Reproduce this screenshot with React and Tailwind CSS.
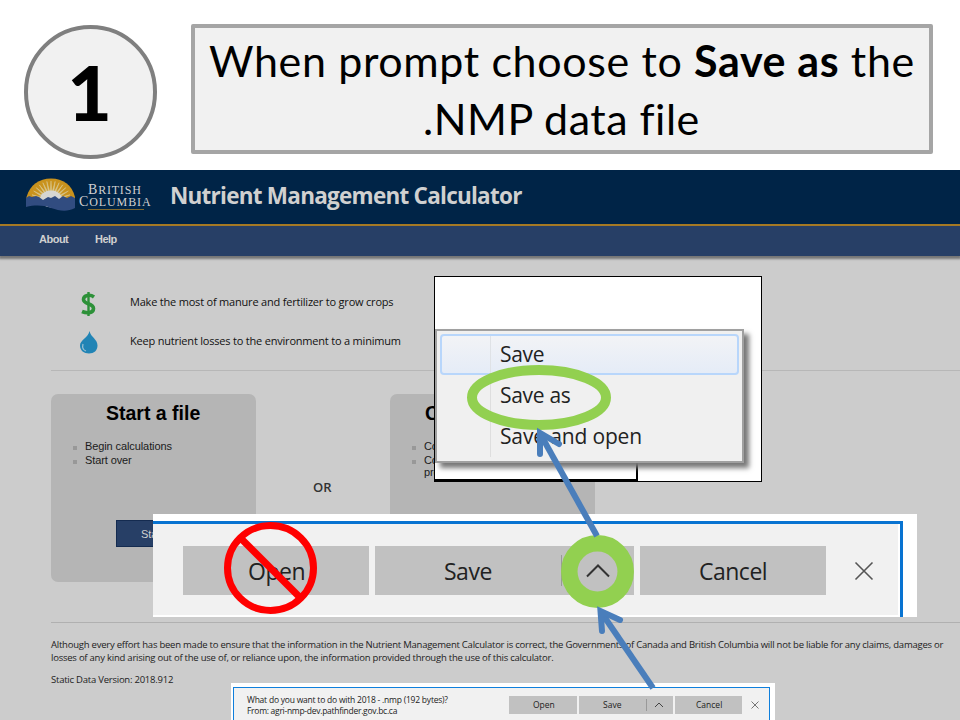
import React from "react";

const seg = "font-['Open_Sans','Noto_Sans',sans-serif]";
const arial = "font-['Liberation_Sans',Arial,sans-serif]";

function T({ className = "", children }) {
  return <span className={`block shrink-0 whitespace-nowrap ${className}`}>{children}</span>;
}

function Heading() {
  return (
    <header className="flex h-[170px] bg-white pl-6 pt-6 font-['Lato',sans-serif] text-black">
      <div className="mt-px flex h-[134px] w-[133px] items-center justify-center rounded-full border-4 border-[#7f7f7f] bg-[#f1f1f1]">
        <T className="pb-px pr-[2px] text-[77px] font-black leading-none">1</T>
      </div>
      <div className="ml-[34px] h-[130px] w-[742px] rounded-[2px] border-4 border-[#a5a5a5] bg-[#f1f1f1] pl-[14px] pt-1 text-[43px] leading-[58px]">
        <T className="tracking-[0.63px]">When prompt choose to <b>Save as</b> the</T>
        <T className="ml-[214px] tracking-[0.5px]">.NMP data file</T>
      </div>
    </header>
  );
}

function Logo() {
  const rays = [-72, -60, -48, -36, -24, -12, 0, 12, 24, 36, 48, 60, 72];
  return (
    <svg className="ml-[26px] mt-2 h-[34px] w-[50px] shrink-0" viewBox="0 0 50 34">
      <path d="M0.500 19C4 7 13 0.500 25 0.500S46 7 49 19v5H0.500z" fill="#c9921d" />
      <g fill="#d8c68d">
        {rays.map((a) => (
          <path key={a} d="M24.200 14L25 3l.8 11z" stroke="#d8c68d" strokeWidth=".5" transform={`rotate(${a} 25 23)`} />
        ))}
      </g>
      <ellipse cx="25" cy="21" rx="11" ry="8.500" fill="#d6d6d2" />
      <path d="M0 20l3-2 3 1 4-1 3 1 4 3 5-3 3 1 4-2 4 3 4-3 4 2 4-2 4 2v10c-8 4-15 3-24 0-8-3-16-3-25-1z" fill="#314c80" />
    </svg>
  );
}

function Banner() {
  return (
    <div className="flex h-14 border-b-2 border-[#a77a22] bg-[#002447] text-[#d0d0d0]">
      <Logo />
      <div className="ml-[3px] mt-[13px] w-[75px] shrink-0 font-['Liberation_Serif',serif] leading-none">
        <T className="ml-[9px] h-[12px] text-[12px] leading-[13px] tracking-[0.8px]"><span className="text-[14px] leading-none">B</span>RITISH</T>
        <T className="h-[12px] text-[12px] leading-[13px] tracking-[0.9px]"><span className="text-[14px] leading-none">C</span>OLUMBIA</T>
        <div className="ml-[9px] mt-[2px] h-px w-14 bg-[#80692f]" />
      </div>
      <T className={`${seg} ml-4 mt-[9px] text-[22.5px] font-bold leading-[34px] tracking-[-0.75px]`}>Nutrient Management Calculator</T>
    </div>
  );
}

function NavBar() {
  return (
    <nav className={`${arial} relative flex h-[30px] bg-[#273f66] pl-[39px] text-[11px] leading-[27px] text-[#d0d0d0] shadow-[0_2px_2px_1px_#777]`}>
      <T className="w-[56px] font-bold tracking-[-0.5px]">About</T>
      <T className="font-bold tracking-[-0.5px]">Help</T>
    </nav>
  );
}

function Bullet({ children }) {
  return (
    <li className="flex leading-[14px]">
      <i className="mr-2 mt-[7px] size-1 bg-[#989898]" />
      <T>{children}</T>
    </li>
  );
}

function Card({ title, titlePad, children }) {
  return (
    <section className={`${arial} h-[188px] w-[205px] shrink-0 rounded-[7px] bg-[#b5b5b5] text-[#1b1b1b]`}>
      <h2 className={`pt-[7px] text-[19.5px] font-bold leading-6 text-black ${titlePad}`}><T>{title}</T></h2>
      <ul className="mt-[14px] pl-[22px] text-[11px] tracking-[-0.1px]">{children}</ul>
    </section>
  );
}

function PageBody() {
  return (
    <main className={`${seg} h-[464px] bg-[#cccccc] pl-[51px] text-[#222]`}>
      <div className="flex h-[114px] flex-col pl-[29px] pt-[26px] text-[11px] font-medium text-[#111]">
        <div className="flex h-[39px] items-center">
          <svg className="mt-1 h-7 w-[18px]" viewBox="0 0 18 28" fill="none" stroke="#2d9139">
            <path d="M8.500 2v24" strokeWidth="2.4" />
            <path d="M14 7C10 4 3.500 5 3.500 9.500c0 5 10 3.500 10 9 0 5-7 5-11.500 3" strokeWidth="3.600" />
          </svg>
          <T className="ml-8 mt-[2px] tracking-[-0.2px]">Make the most of manure and fertilizer to grow crops</T>
        </div>
        <div className="flex h-[39px] items-center">
          <svg className="mt-1 h-[23px] w-[18px]" viewBox="0 0 18 23">
            <path d="M9.500 0c1 6 8 8 8 14.500 0 5-3.500 8-8.500 8s-9-3-9-8C0 9 8 7 9.500 0z" fill="#2184b5" />
            <path d="M3 13c-1 4 0 6 3 7" stroke="#9ec2d3" strokeWidth="1.200" fill="none" />
          </svg>
          <T className="ml-8 mt-[2px] tracking-[-0.2px]">Keep nutrient losses to the environment to a minimum</T>
        </div>
      </div>
      <hr className="border-[#b7b7b7]" />
      <div className="mt-[23px] flex">
        <Card title="Start a file" titlePad="pl-[55px]">
          <Bullet>Begin calculations</Bullet>
          <Bullet>Start over</Bullet>
          <li className="ml-[43px] mt-[53px] h-[27px] w-[130px] border border-[#142b50] bg-[#273f66] pl-6 leading-[27px] text-[#d0d0d0]">Start</li>
        </Card>
        <T className="w-[134px] pl-[57px] pt-[83px] text-[13px] font-semibold leading-5 text-[#333]">OR</T>
        <Card title="Continue" titlePad="pl-[35px]">
          <Bullet>Continue</Bullet>
          <Bullet>Continue</Bullet>
          <li className="pl-3 leading-[11px]">previous</li>
        </Card>
      </div>
      <hr className="mt-10 border-[#b0b0b0]" />
      <div className="pt-[15px] text-[9.5px] font-medium leading-[13px] tracking-[-0.23px] text-[#222]">
        <T>Although every effort has been made to ensure that the information in the Nutrient Management Calculator is correct, the Governments of Canada and British Columbia will not be liable for any claims, damages or</T>
        <T>losses of any kind arising out of the use of, or reliance upon, the information provided through the use of this calculator.</T>
        <T className="mt-[9px]">Static Data Version: 2018.912</T>
      </div>
    </main>
  );
}

function MenuPopup() {
  return (
    <div className={`${seg} absolute left-[434px] top-[276px] h-[206px] w-[328px] border border-black bg-white pt-[52px]`}>
      <div className="relative h-[134px] w-[309px] border-2 border-[#a0a0a0] bg-[#f0f0f0] pl-[3px] pt-[3px] text-[21px] font-medium text-[#222] shadow-[5px_5px_5px_#777]">
        <div className="flex h-[41px] w-[299px] items-center rounded-[4px] border-2 border-[#b8d6fb] bg-linear-to-b from-[#f2f3f6] to-[#e5ecf7]">
          <div className="h-full w-[49px] border-r border-[#dfe2e6]" />
          <T className="ml-[9px] tracking-[-0.3px]">Save</T>
        </div>
        <div className="ml-[50px] h-[82px] border-l border-[#dedede] pl-[9px] leading-[41px]">
          <T className="tracking-[-0.3px]">Save as</T>
          <T className="tracking-[-0.15px]">Save and open</T>
        </div>
      </div>
      <div className="h-[18px] w-[203px] border-b-2 border-r-2 border-black" />
    </div>
  );
}

function BigBar() {
  return (
    <div className={`${seg} absolute left-[153px] top-[514px] h-[103px] w-[764px] bg-white pt-[7px]`}>
      <div className="h-[96px] w-[750px] border-r-[3px] border-t-[3px] border-[#0873d1]">
        <div className="flex h-[91px] w-[745px] bg-[#f1f1f1] pl-[30px] pt-[22px] text-[23px] leading-[50px] text-[#222]">
          <div className="h-[49px] w-[186px] bg-[#c1c1c1] pl-[65px]"><T className="tracking-[-0.5px]">Open</T></div>
          <div className="ml-[6px] flex h-[49px] w-[259px] items-center bg-[#c1c1c1] pl-[69px]">
            <T className="w-[117px] tracking-[-0.5px]">Save</T>
            <div className="h-[31px] w-px bg-[#999]" />
            <svg className="ml-6 h-[14px] w-[24px]" viewBox="0 0 24 14"><path d="M1 12.500L12 1.500l11 11" fill="none" stroke="#333" strokeWidth="2" /></svg>
          </div>
          <div className="ml-[6px] h-[49px] w-[186px] bg-[#c1c1c1] pl-[59px]"><T className="tracking-[-0.5px]">Cancel</T></div>
          <svg className="ml-[28px] mt-[15px] size-[20px]" viewBox="0 0 20 20"><path d="M1.500 1.500l17 17m0-17l-17 17" stroke="#555" strokeWidth="1.600" /></svg>
        </div>
      </div>
    </div>
  );
}

function SmallBar() {
  return (
    <div className={`${seg} absolute left-[231px] top-[683px] h-[37px] w-[544px] overflow-hidden bg-white pl-[2px] pt-1`}>
      <div className="flex h-10 w-[537px] border border-[#0f7fdc] bg-[#f1f1f1] text-[8.500px] leading-[18px] text-[#222]">
        <div className="w-[275px] pl-[13px] pt-[6px] leading-[11px]">
          <T className="tracking-[-0.22px]">What do you want to do with 2018 - .nmp (192 bytes)?</T>
          <T className="tracking-[-0.28px]">From: agri-nmp-dev.pathfinder.gov.bc.ca</T>
        </div>
        <div className="mt-2 flex h-[18px]">
          <div className="w-[68px] bg-[#c1c1c1] pl-6"><T>Open</T></div>
          <div className="ml-[2px] flex w-[94px] items-center bg-[#c1c1c1] pl-6">
            <T className="w-[43px]">Save</T>
            <div className="h-3 w-px bg-[#999]" />
            <svg className="ml-[7px] h-[6px] w-[10px]" viewBox="0 0 10 6"><path d="M1 5l4-4 4 4" fill="none" stroke="#444" /></svg>
          </div>
          <div className="ml-[2px] w-[67px] bg-[#c1c1c1] pl-[21px]"><T>Cancel</T></div>
          <svg className="ml-[9px] mt-[5px] size-2" viewBox="0 0 8 8"><path d="M.5.5l7 7m0-7l-7 7" stroke="#666" strokeWidth=".9" /></svg>
        </div>
      </div>
    </div>
  );
}

function Annotations() {
  return (
    <svg className="absolute left-0 top-0 h-[720px] w-[960px]" viewBox="0 0 960 720" fill="none">
      <ellipse cx="539" cy="397.500" rx="67" ry="27.500" stroke="#92d050" strokeWidth="10" />
      <circle cx="597.500" cy="571.500" r="28.200" stroke="#92d050" strokeWidth="16.500" />
      <g stroke="#4a7ebb" strokeWidth="6">
        <path d="M597 536L542 437" />
        <path d="M540 454V433l19 11" strokeLinecap="round" />
        <path d="M653 688L601 612" />
        <path d="M602 631L600.500 611l19.500 9" strokeLinecap="round" />
      </g>
      <g stroke="#ff0000" strokeWidth="7">
        <ellipse cx="270.500" cy="568" rx="43" ry="42.500" />
        <path d="M240.500 538L300.500 598" />
      </g>
    </svg>
  );
}

export default function App() {
  return (
    <div className="relative h-[720px] w-[960px] overflow-hidden bg-white">
      <Heading />
      <Banner />
      <NavBar />
      <PageBody />
      <MenuPopup />
      <BigBar />
      <SmallBar />
      <Annotations />
    </div>
  );
}
